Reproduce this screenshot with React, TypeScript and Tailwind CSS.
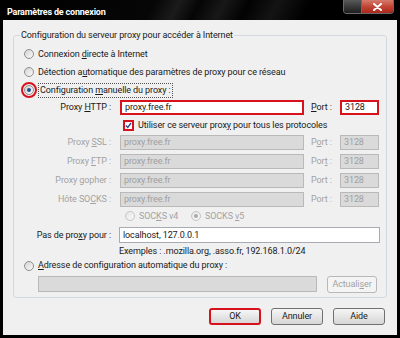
import type { ReactNode } from 'react'

const U = ({ children }: { children: ReactNode }) => (
  <span className="underline underline-offset-[1px] decoration-[0.5px]">{children}</span>
)

const Radio = ({ checked = false, disabled = false, ring = false }: { checked?: boolean; disabled?: boolean; ring?: boolean }) => (
  <span className="relative flex h-[10px] w-[10px] shrink-0 items-center justify-center">
    {ring && <span className="absolute -inset-[3px] rounded-full border-2 border-[#d8121c]" />}
    <span
      className={`flex h-[10px] w-[10px] items-center justify-center rounded-full border bg-gradient-to-br ${
        disabled ? 'border-[#c4c4c4] from-[#e6e6e6] to-[#f8f8f8]' : 'border-[#8e8f8f] from-[#d2d2d2] to-[#fbfbfb]'
      }`}
    >
      {checked && (
        <span className={`h-[4px] w-[4px] rounded-full ${disabled ? 'bg-[#a9a9a9]' : 'bg-[#1d4f91]'}`} />
      )}
    </span>
  </span>
)

const Field = ({ value, width, disabled = false, red = false }: { value: string; width: string; disabled?: boolean; red?: boolean }) => (
  <div
    className={`flex h-[15px] items-center px-[3px] ${width} ${
      red
        ? 'border-2 border-[#d8121c] bg-white text-[#1a1a1a]'
        : disabled
          ? 'border border-[#b9b9b9] bg-[#dadada] text-[#9f9f9f]'
          : 'border border-[#a8acb2] bg-white text-[#1a1a1a]'
    }`}
  >
    {value}
  </div>
)

const ProxyRow = ({ label, port, disabled = true, red = false, mt }: { label: ReactNode; port: ReactNode; disabled?: boolean; red?: boolean; mt: string }) => (
  <div className={`flex h-[15px] items-center ${mt} ${disabled ? 'text-[#a3a3a3]' : ''}`}>
    <span className="w-[97px] text-right">{label}</span>
    <Field value="proxy.free.fr" width="ml-[9px] w-[184px]" disabled={disabled} red={red} />
    <span className="ml-[7px] w-[29px]">{port}</span>
    <Field value="3128" width="w-[39px]" disabled={disabled} red={red} />
  </div>
)

const Button = ({ children, red = false }: { children: ReactNode; red?: boolean }) => (
  <div
    className={`flex h-[17px] w-[52px] items-center justify-center rounded-[3px] bg-gradient-to-b from-[#f6f6f6] via-[#e6e6e6] to-[#d6d6d6] text-[#1a1a1a] ${
      red ? 'border-2 border-[#d8121c]' : 'border border-[#707070]'
    }`}
  >
    {children}
  </div>
)

export default function App() {
  return (
    <div className="flex h-[338px] w-[400px] flex-col overflow-hidden bg-black font-['Roboto',sans-serif] text-[9px] leading-none tracking-[-0.1px] text-[#1a1a1a]">
      <div className="relative flex h-[20px] shrink-0 bg-[linear-gradient(118deg,#000_0%,#060606_38%,#1b1b1b_44%,#050505_49%,#181818_55%,#020202_61%,#141414_68%,#000_76%,#000_100%)]">
        <span className="ml-[7px] mt-[8px] text-[9px] font-bold tracking-[-0.2px] text-white">Paramètres de connexion</span>
        <div className="absolute right-[6px] top-0 flex h-[14px] overflow-hidden rounded-b-[4px] border border-t-0 border-[#6a6a6a]">
          <div className="w-[17px] bg-gradient-to-b from-[#5a5a5a] to-[#1e1e1e]" />
          <div className="flex w-[32px] items-center justify-center border-l border-[#6a6a6a] bg-gradient-to-b from-[#d47a6e] via-[#c24535] to-[#a8281c]">
            <svg width="9" height="8" viewBox="0 0 9 8">
              <path d="M1 1 L8 7 M8 1 L1 7" stroke="#fff" strokeWidth="2" strokeLinecap="round" />
            </svg>
          </div>
        </div>
      </div>

      <div className="mx-[3px] mb-[3px] flex flex-1 flex-col bg-[#f0f0f0]">
        <div className="relative ml-[10px] mt-[15px] w-[374px] rounded-[3px] border border-[#d3d9de] pb-[5px] pt-[9px]">
          <span className="absolute -top-[5px] left-[6px] bg-[#f0f0f0] px-[1px]">
            Configuration du serveur proxy pour accéder à Internet
          </span>

          <div className="flex h-[18px] items-center gap-[4px] pl-[10px]">
            <Radio />
            <span>Connexion <U>d</U>irecte à Internet</span>
          </div>
          <div className="flex h-[18px] items-center gap-[4px] pl-[10px]">
            <Radio />
            <span>Détection a<U>u</U>tomatique des paramètres de proxy pour ce réseau</span>
          </div>
          <div className="flex h-[18px] items-center gap-[4px] pl-[10px]">
            <Radio checked ring />
            <span className="border border-dotted border-[#555] px-[1px] py-[2px]">
              Configuration <U>m</U>anuelle du proxy :
            </span>
          </div>

          <ProxyRow
            mt="mt-[1px]"
            disabled={false}
            red
            label={<>Proxy <U>H</U>TTP :</>}
            port={<><U>P</U>ort :</>}
          />

          <div className="flex h-[20px] items-center pl-[109px]">
            <span className="flex h-[11px] w-[11px] items-center justify-center border-2 border-[#d8121c] bg-white">
              <svg width="7" height="7" viewBox="0 0 7 7">
                <path d="M1 3.5 L2.8 5.5 L6 1" stroke="#2a4a8a" strokeWidth="1.4" fill="none" />
              </svg>
            </span>
            <span className="ml-[4px]">Utiliser ce serveur prox<U>y</U> pour tous les protocoles</span>
          </div>

          <ProxyRow mt="mt-0" label={<>Proxy <U>S</U>SL :</>} port={<>P<U>o</U>rt :</>} />
          <ProxyRow mt="mt-[4px]" label={<>Proxy <U>F</U>TP :</>} port={<>Por<U>t</U> :</>} />
          <ProxyRow mt="mt-[4px]" label={<>Proxy gopher :</>} port={<>Port :</>} />
          <ProxyRow mt="mt-[4px]" label={<>Hôte SO<U>C</U>KS :</>} port={<>Port :</>} />

          <div className="flex h-[18px] items-center pl-[111px] text-[#a3a3a3]">
            <Radio disabled />
            <span className="ml-[4px] w-[52px]">SOC<U>K</U>S v4</span>
            <Radio disabled checked />
            <span className="ml-[4px]">SOCKS <U>v</U>5</span>
          </div>

          <div className="mt-[2px] flex h-[16px] items-center">
            <span className="w-[97px] text-right">Pas de pro<U>x</U>y pour :</span>
            <div className="ml-[8px] flex h-[16px] w-[261px] items-center border border-[#a8acb2] bg-white px-[3px]">
              localhost, 127.0.0.1
            </div>
          </div>

          <div className="flex h-[17px] items-center pl-[105px]">
            Exemples : .mozilla.org, .asso.fr, 192.168.1.0/24
          </div>

          <div className="flex h-[11px] items-center gap-[4px] pl-[10px]">
            <Radio />
            <span><U>A</U>dresse de configuration automatique du proxy :</span>
          </div>

          <div className="mt-[5px] flex h-[16px] items-center pl-[24px]">
            <div className="h-[16px] w-[279px] border border-[#b9b9b9] bg-[#dadada]" />
            <div className="ml-[10px] flex h-[17px] w-[50px] items-center justify-center rounded-[3px] border border-[#b5b9bc] bg-[#f4f4f4] text-[#a3a3a3]">
              Actuali<U>s</U>er
            </div>
          </div>
        </div>

        <div className="mt-[10px] flex justify-end gap-[10px] pr-[12px]">
          <Button red>OK</Button>
          <Button>Annuler</Button>
          <Button>Aide</Button>
        </div>
      </div>
    </div>
  )
}
